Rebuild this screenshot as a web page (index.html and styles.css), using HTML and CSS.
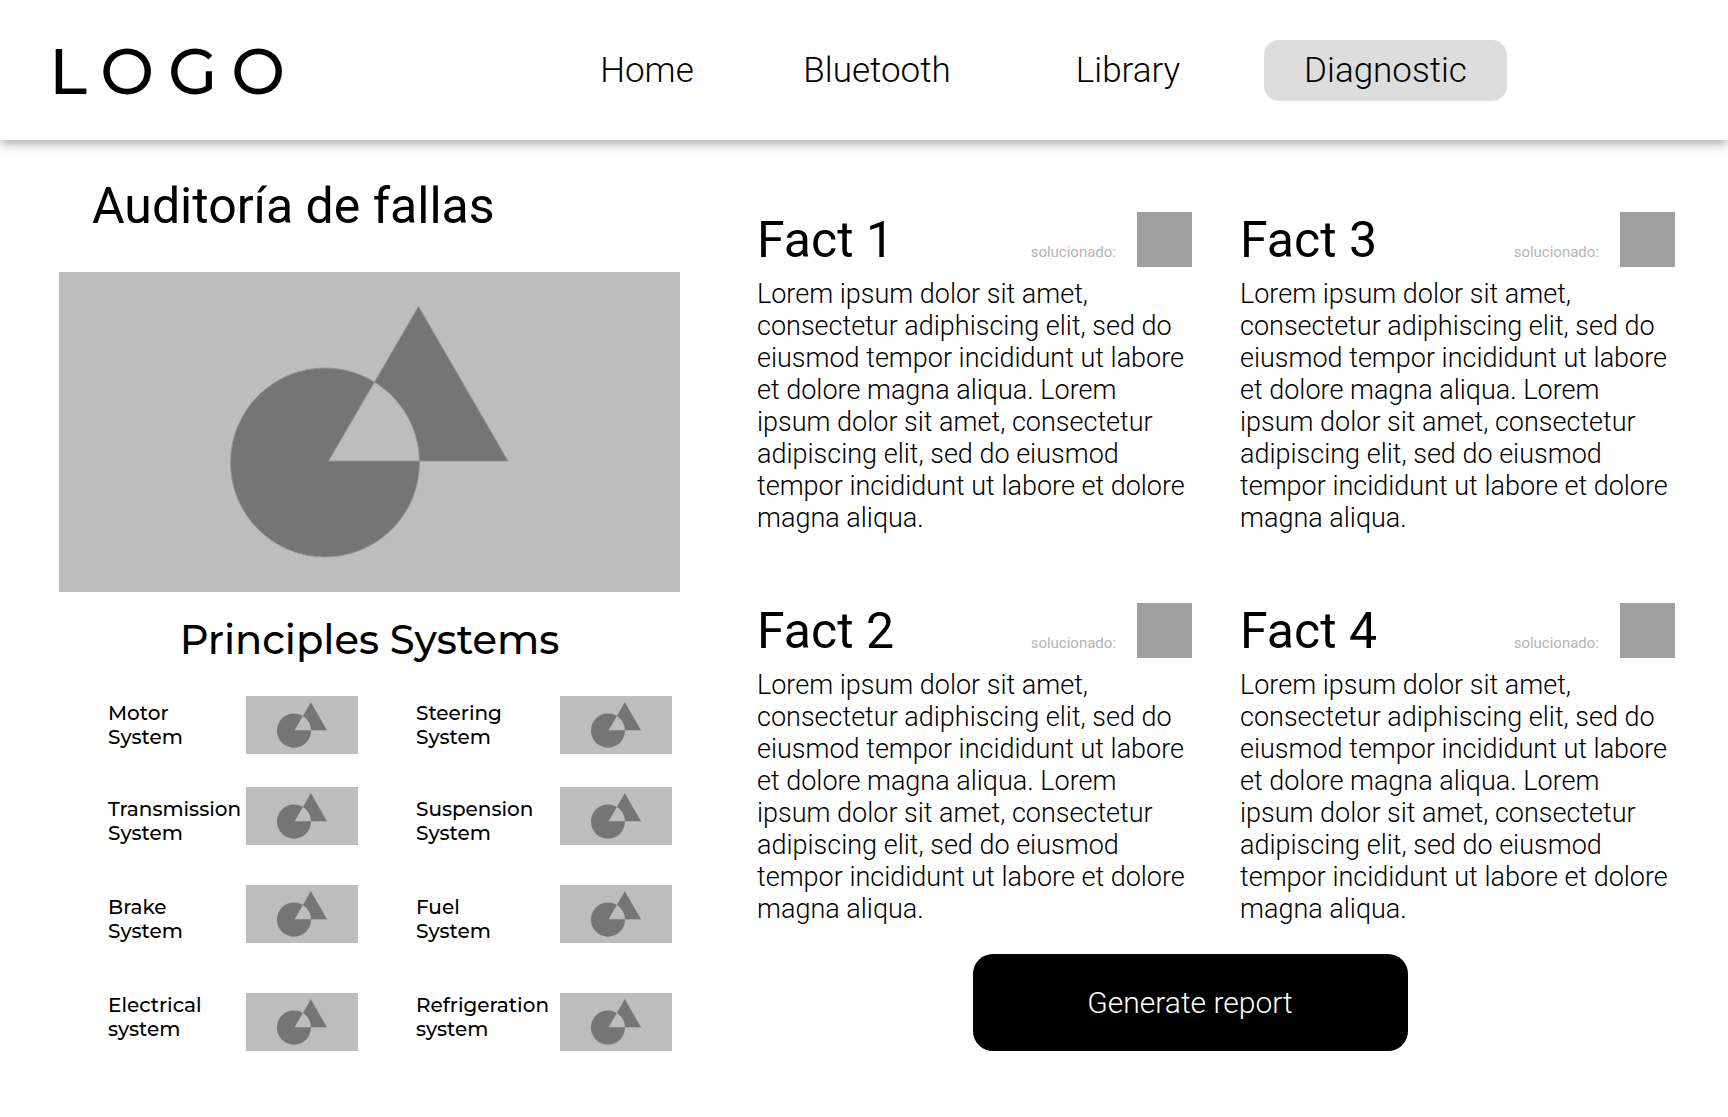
FILE: index.html
```html
<!DOCTYPE html>
<html lang="es">
<head>
<meta charset="utf-8">
<meta name="viewport" content="width=device-width, initial-scale=1">
<title>Auditoría de fallas</title>
<link rel="stylesheet" href="styles.css">
</head>
<body>
<svg class="sprite" aria-hidden="true">
  <symbol id="shapes" viewBox="0 0 621 320" preserveAspectRatio="none">
    <path fill="#757575" stroke="#959595" stroke-width="1" fill-rule="evenodd" d="M171.500 190.500a94.500 94.500 0 1 0 189 0a94.500 94.500 0 1 0-189 0zM359.500 34.500L449 189H269.500z"/>
  </symbol>
</svg>

<header class="header">
  <div class="logo">LOGO</div>
  <nav class="nav">
    <a class="nav-link" href="#">Home</a>
    <a class="nav-link" href="#">Bluetooth</a>
    <a class="nav-link" href="#">Library</a>
    <a class="nav-link nav-link-active" href="#" aria-current="page">Diagnostic</a>
  </nav>
</header>

<main class="main">
  <section class="overview">
    <h1 class="title">Auditoría de fallas</h1>
    <svg class="hero" viewBox="0 0 621 320"><use href="#shapes" width="621" height="320"/></svg>
    <h2 class="subtitle">Principles Systems</h2>
    <ul class="systems">
      <li class="system"><span>Motor<br>System</span><svg class="thumb"><use href="#shapes"/></svg></li>
      <li class="system"><span>Steering<br>System</span><svg class="thumb"><use href="#shapes"/></svg></li>
      <li class="system system-low"><span>Transmission<br>System</span><svg class="thumb"><use href="#shapes"/></svg></li>
      <li class="system system-low"><span>Suspension<br>System</span><svg class="thumb"><use href="#shapes"/></svg></li>
      <li class="system system-low"><span>Brake<br>System</span><svg class="thumb"><use href="#shapes"/></svg></li>
      <li class="system system-low"><span>Fuel<br>System</span><svg class="thumb"><use href="#shapes"/></svg></li>
      <li class="system system-high"><span>Electrical<br>system</span><svg class="thumb"><use href="#shapes"/></svg></li>
      <li class="system system-high"><span>Refrigeration<br>system</span><svg class="thumb"><use href="#shapes"/></svg></li>
    </ul>
  </section>

  <section class="report">
    <div class="facts">
      <article class="fact">
        <div class="fact-head">
          <h2 class="fact-title">Fact 1</h2>
          <label class="fact-label" for="fact1">solucionado:</label>
          <input class="fact-check" type="checkbox" id="fact1">
        </div>
        <p class="fact-text">Lorem ipsum dolor sit amet, consectetur adiphiscing elit, sed do eiusmod tempor incididunt ut labore et dolore magna aliqua. Lorem ipsum dolor sit amet, consectetur adipiscing elit, sed do eiusmod tempor incididunt ut labore et dolore magna aliqua.</p>
      </article>
      <article class="fact">
        <div class="fact-head">
          <h2 class="fact-title">Fact 3</h2>
          <label class="fact-label" for="fact3">solucionado:</label>
          <input class="fact-check" type="checkbox" id="fact3">
        </div>
        <p class="fact-text">Lorem ipsum dolor sit amet, consectetur adiphiscing elit, sed do eiusmod tempor incididunt ut labore et dolore magna aliqua. Lorem ipsum dolor sit amet, consectetur adipiscing elit, sed do eiusmod tempor incididunt ut labore et dolore magna aliqua.</p>
      </article>
      <article class="fact">
        <div class="fact-head">
          <h2 class="fact-title">Fact 2</h2>
          <label class="fact-label" for="fact2">solucionado:</label>
          <input class="fact-check" type="checkbox" id="fact2">
        </div>
        <p class="fact-text">Lorem ipsum dolor sit amet, consectetur adiphiscing elit, sed do eiusmod tempor incididunt ut labore et dolore magna aliqua. Lorem ipsum dolor sit amet, consectetur adipiscing elit, sed do eiusmod tempor incididunt ut labore et dolore magna aliqua.</p>
      </article>
      <article class="fact">
        <div class="fact-head">
          <h2 class="fact-title">Fact 4</h2>
          <label class="fact-label" for="fact4">solucionado:</label>
          <input class="fact-check" type="checkbox" id="fact4">
        </div>
        <p class="fact-text">Lorem ipsum dolor sit amet, consectetur adiphiscing elit, sed do eiusmod tempor incididunt ut labore et dolore magna aliqua. Lorem ipsum dolor sit amet, consectetur adipiscing elit, sed do eiusmod tempor incididunt ut labore et dolore magna aliqua.</p>
      </article>
    </div>
    <button class="generate" type="button">Generate report</button>
  </section>
</main>
</body>
</html>
```
FILE: styles.css
```css
* {
  box-sizing: border-box;
}

body {
  margin: 0;
  background: #fff;
  color: #000;
  font-family: Roboto, sans-serif;
}

h1, h2, p, ul {
  margin: 0;
  padding: 0;
  font-weight: 400;
}

.sprite {
  display: none;
}

.header {
  display: flex;
  align-items: center;
  height: 140px;
  padding: 0 221px 0 49px;
  background: #fff;
  box-shadow: 0 4px 10px rgba(0, 0, 0, 0.32);
}

.logo {
  flex: 0 0 483px;
  padding-top: 2px;
  font-family: Montserrat, Lato, sans-serif;
  font-size: 64px;
  font-weight: 500;
  letter-spacing: 14px;
}

.nav {
  display: grid;
  flex: 1;
  grid-template-columns: 230fr 230fr 272fr 243fr;
}

.nav-link {
  border-radius: 15px;
  color: #000;
  font-size: 35px;
  font-weight: 300;
  line-height: 61px;
  text-align: center;
  text-decoration: none;
}

.nav-link-active {
  background: #ddd;
}

.main {
  display: grid;
  grid-template-columns: 621fr 918fr;
  column-gap: 77px;
  padding: 0 53px 40px 59px;
}

.title {
  padding: 36px 0 36px 33px;
  font-size: 50px;
  line-height: 60px;
}

.hero {
  display: block;
  width: 100%;
  background: #bdbdbd;
}

.subtitle {
  padding: 24px 0 32px;
  font-family: Montserrat, Inter, sans-serif;
  font-size: 40px;
  font-weight: 500;
  line-height: 48px;
  text-align: center;
}

.systems {
  display: grid;
  grid-template-columns: 250fr 256fr;
  grid-template-rows: 91px 98px 108px 58px;
  align-items: start;
  column-gap: 58px;
  padding: 0 8px 0 49px;
  list-style: none;
}

.system {
  display: flex;
  align-items: center;
  justify-content: space-between;
  font-family: Montserrat, Inter, sans-serif;
  font-size: 20px;
  font-weight: 500;
  line-height: 24px;
}

.system-low {
  align-items: flex-end;
}

.system-high {
  align-items: flex-start;
}

.thumb {
  flex: none;
  width: 112px;
  height: 58px;
  background: #bdbdbd;
}

.report {
  display: flex;
  flex-direction: column;
  align-items: center;
  padding-top: 72px;
}

.facts {
  display: grid;
  grid-template-columns: 1fr 1fr;
  gap: 69px 48px;
  width: 100%;
}

.fact-head {
  display: flex;
  align-items: baseline;
  height: 55px;
}

.fact-title {
  flex: 1;
  font-size: 50px;
  line-height: 56px;
}

.fact-label {
  color: #b5b5b5;
  font-size: 15px;
}

.fact-check {
  align-self: flex-start;
  width: 55px;
  height: 55px;
  margin: 0 0 0 21px;
  appearance: none;
  background: #a0a0a0;
}

.fact-text {
  padding-top: 11px;
  font-size: 27px;
  font-weight: 300;
  line-height: 32px;
}

.generate {
  width: 435px;
  height: 97px;
  margin: 29px 52px 0 0;
  border: 0;
  border-radius: 20px;
  background: #000;
  color: #fff;
  font-family: Roboto, sans-serif;
  font-size: 30px;
  font-weight: 300;
}
```
